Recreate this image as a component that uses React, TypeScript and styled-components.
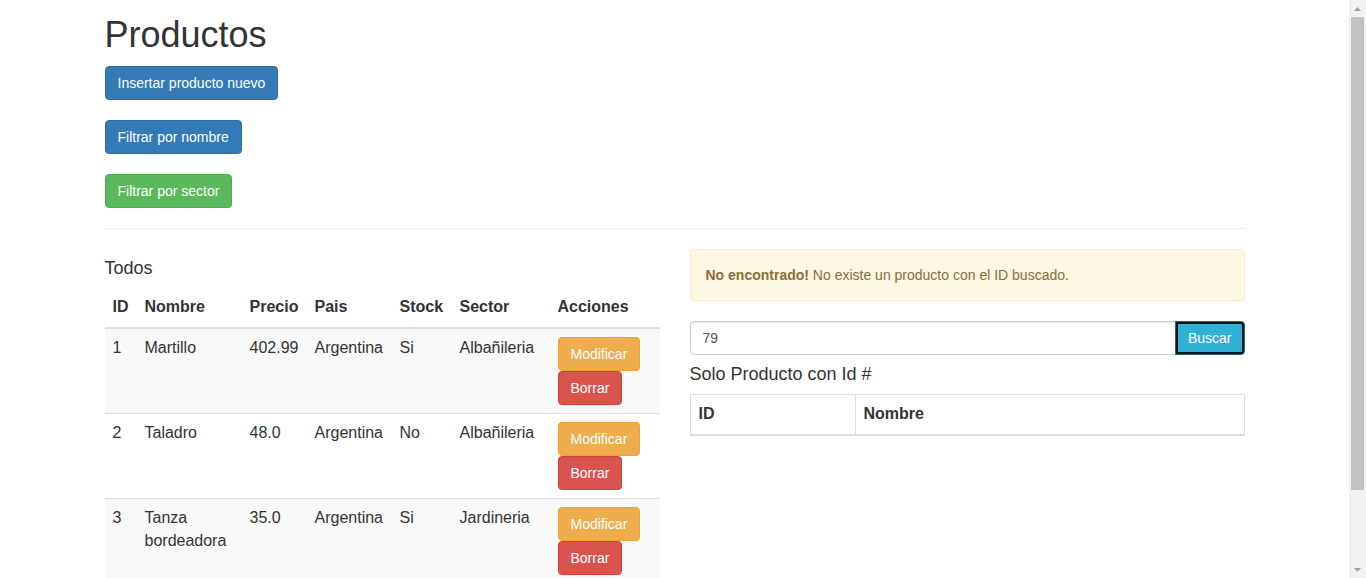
import React from "react";
import styled, { createGlobalStyle, css } from "styled-components";

const GlobalStyle = createGlobalStyle`
  * { box-sizing: border-box; }
  html, body { margin: 0; padding: 0; background: #fff; overflow: hidden; }
  body {
    font-family: "Liberation Sans", Arial, Helvetica, sans-serif;
    font-size: 14px;
    line-height: 1.42857143;
    color: #333;
  }
`;

type Variant = "primary" | "success" | "warning" | "danger" | "info";

const variants: Record<Variant, ReturnType<typeof css>> = {
  primary: css`background: #337ab7; border-color: #2e6da4;`,
  success: css`background: #5cb85c; border-color: #4cae4c;`,
  warning: css`background: #f0ad4e; border-color: #eea236;`,
  danger: css`background: #d9534f; border-color: #d43f3a;`,
  info: css`background: #5bc0de; border-color: #46b8da;`,
};

const Shell = styled.div`
  display: flex;
  height: 100vh;
`;

const Viewport = styled.main`
  flex: 1;
  min-width: 0;
  overflow: hidden;
`;

const ScrollBar = styled.div`
  width: 17px;
  flex: none;
  display: flex;
  flex-direction: column;
  background: #f1f1f1;
`;

const ScrollArrow = styled.div`
  height: 17px;
  flex: none;
  display: flex;
  align-items: center;
  justify-content: center;
`;

const ScrollTrack = styled.div`
  flex: 1;
  display: flex;
  flex-direction: column;
  padding: 0 2px;
`;

const ScrollThumb = styled.div`
  height: 473px;
  background: #c1c1c1;
`;

const Container = styled.div`
  width: 1170px;
  margin: 0 auto;
  padding: 0 15px;
`;

const Title = styled.h1`
  font-size: 36px;
  font-weight: 500;
  line-height: 1.1;
  margin: 15px 0 11px;
`;

const ActionsColumn = styled.div`
  display: flex;
  flex-direction: column;
  align-items: flex-start;
  gap: 20px;
`;

const Btn = styled.button<{ $variant: Variant }>`
  display: inline-block;
  padding: 6px 12px;
  font-family: inherit;
  font-size: 14px;
  line-height: 1.42857143;
  font-weight: 400;
  color: #fff;
  border: 1px solid transparent;
  border-radius: 4px;
  cursor: pointer;
  white-space: nowrap;
  ${({ $variant }) => variants[$variant]}
`;

const Rule = styled.hr`
  border: 0;
  border-top: 1px solid #eee;
  margin: 20px 0;
`;

const Columns = styled.div`
  display: grid;
  grid-template-columns: 1fr 1fr;
  column-gap: 30px;
`;

const Column = styled.div`
  min-width: 0;
`;

const SectionTitle = styled.h4`
  font-size: 18px;
  font-weight: 500;
  line-height: 1.1;
  margin: 10px 0;
`;

const Table = styled.table<{ $bordered?: boolean }>`
  width: 100%;
  border-collapse: collapse;
  border-spacing: 0;
  table-layout: fixed;
  font-size: 16px;
  line-height: 1.42857143;
  margin-bottom: 20px;
  ${({ $bordered }) => $bordered && css`border: 1px solid #ddd;`}
`;

const Th = styled.th<{ $bordered?: boolean }>`
  text-align: left;
  font-weight: 700;
  padding: 8px;
  vertical-align: bottom;
  border-bottom: 2px solid #ddd;
  ${({ $bordered }) =>
    $bordered &&
    css`
      border-left: 1px solid #ddd;
      border-right: 1px solid #ddd;
    `}
`;

const Tr = styled.tr`
  &:nth-child(odd) {
    background: #f9f9f9;
  }
`;

const Td = styled.td`
  padding: 8px;
  vertical-align: top;
  border-top: 1px solid #ddd;
`;

const ActionStack = styled.div`
  display: flex;
  flex-direction: column;
  align-items: flex-start;
`;

const Alert = styled.div`
  padding: 15px;
  margin-bottom: 20px;
  border: 1px solid #faebcc;
  border-radius: 4px;
  background: #fcf8e3;
  color: #8a6d3b;
  font-size: 14px;
  strong {
    font-weight: 700;
  }
`;

const InputGroup = styled.div`
  display: flex;
`;

const SearchInput = styled.input`
  flex: 1;
  min-width: 0;
  height: 34px;
  padding: 6px 12px;
  font-family: inherit;
  font-size: 14px;
  line-height: 1.42857143;
  color: #555;
  background: #fff;
  border: 1px solid #ccc;
  border-radius: 4px 0 0 4px;
  box-shadow: inset 0 1px 1px rgba(0, 0, 0, 0.075);
  outline: none;
`;

const SearchButton = styled(Btn)`
  margin-left: -1px;
  border-radius: 0 4px 4px 0;
  background: #31b0d5;
  border-color: #1b6d85;
  outline: 2px solid #101010;
  outline-offset: -3px;
`;

const products = [
  { id: 1, nombre: "Martillo", precio: "402.99", pais: "Argentina", stock: "Si", sector: "Albañileria" },
  { id: 2, nombre: "Taladro", precio: "48.0", pais: "Argentina", stock: "No", sector: "Albañileria" },
  { id: 3, nombre: "Tanza bordeadora", precio: "35.0", pais: "Argentina", stock: "Si", sector: "Jardineria" },
];

const colWidths = [32, 105, 65, 85, 60, 98, 110];
const headers = ["ID", "Nombre", "Precio", "Pais", "Stock", "Sector", "Acciones"];

const ArrowIcon = ({ up }: { up?: boolean }) => (
  <svg width="7" height="4" viewBox="0 0 7 4">
    <path d={up ? "M0 4 L3.5 0 L7 4 Z" : "M0 0 L3.5 4 L7 0 Z"} fill="#a3a3a3" />
  </svg>
);

export default function App() {
  return (
    <>
      <GlobalStyle />
      <Shell>
        <Viewport>
          <Container>
            <Title>Productos</Title>
            <ActionsColumn>
              <Btn $variant="primary">Insertar producto nuevo</Btn>
              <Btn $variant="primary">Filtrar por nombre</Btn>
              <Btn $variant="success">Filtrar por sector</Btn>
            </ActionsColumn>
            <Rule />
            <Columns>
              <Column>
                <SectionTitle>Todos</SectionTitle>
                <Table>
                  <colgroup>
                    {colWidths.map((w, i) => (
                      <col key={i} style={{ width: w }} />
                    ))}
                  </colgroup>
                  <thead>
                    <tr>
                      {headers.map((h) => (
                        <Th key={h}>{h}</Th>
                      ))}
                    </tr>
                  </thead>
                  <tbody>
                    {products.map((p) => (
                      <Tr key={p.id}>
                        <Td>{p.id}</Td>
                        <Td>{p.nombre}</Td>
                        <Td>{p.precio}</Td>
                        <Td>{p.pais}</Td>
                        <Td>{p.stock}</Td>
                        <Td>{p.sector}</Td>
                        <Td>
                          <ActionStack>
                            <Btn $variant="warning">Modificar</Btn>
                            <Btn $variant="danger">Borrar</Btn>
                          </ActionStack>
                        </Td>
                      </Tr>
                    ))}
                  </tbody>
                </Table>
              </Column>
              <Column>
                <Alert>
                  <strong>No encontrado!</strong> No existe un producto con el ID buscado.
                </Alert>
                <InputGroup>
                  <SearchInput defaultValue="79" />
                  <SearchButton $variant="info">Buscar</SearchButton>
                </InputGroup>
                <SectionTitle>Solo Producto con Id #</SectionTitle>
                <Table $bordered>
                  <colgroup>
                    <col style={{ width: 165 }} />
                    <col />
                  </colgroup>
                  <thead>
                    <tr>
                      <Th $bordered>ID</Th>
                      <Th $bordered>Nombre</Th>
                    </tr>
                  </thead>
                </Table>
              </Column>
            </Columns>
          </Container>
        </Viewport>
        <ScrollBar>
          <ScrollArrow>
            <ArrowIcon up />
          </ScrollArrow>
          <ScrollTrack>
            <ScrollThumb />
          </ScrollTrack>
          <ScrollArrow>
            <ArrowIcon />
          </ScrollArrow>
        </ScrollBar>
      </Shell>
    </>
  );
}
